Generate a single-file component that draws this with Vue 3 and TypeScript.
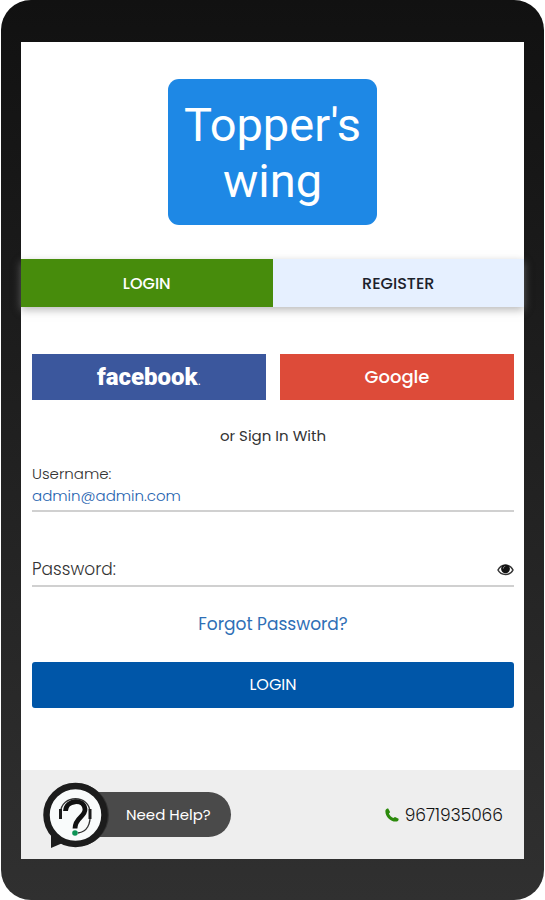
<script setup lang="ts">
import { ref } from 'vue'

type Tab = 'login' | 'register'

const tabs: { id: Tab; label: string }[] = [
  { id: 'login', label: 'LOGIN' },
  { id: 'register', label: 'REGISTER' },
]
const activeTab = ref<Tab>('login')
const username = ref('admin@admin.com')
const password = ref('')
const showPassword = ref(false)
</script>

<template>
  <div class="device">
    <main class="screen">
      <header class="brand">
        <h1 class="logo">Topper's<br />wing</h1>
      </header>

      <nav class="tabs">
        <button
          v-for="tab in tabs"
          :key="tab.id"
          type="button"
          class="tab"
          :class="{ active: tab.id === activeTab }"
          @click="activeTab = tab.id"
        >
          {{ tab.label }}
        </button>
      </nav>

      <form class="form" @submit.prevent>
        <div class="social">
          <button type="button" class="facebook">facebook<span class="mark">.</span></button>
          <button type="button" class="google">Google</button>
        </div>

        <p class="divider">or Sign In With</p>

        <div class="field stacked">
          <label for="username">Username:</label>
          <input id="username" v-model="username" type="text" autocomplete="username" />
        </div>

        <div class="field inline">
          <label for="password">Password:</label>
          <input
            id="password"
            v-model="password"
            :type="showPassword ? 'text' : 'password'"
            autocomplete="current-password"
          />
          <button type="button" class="eye" aria-label="Show password" @click="showPassword = !showPassword">
            <svg viewBox="0 0 17 13" width="17" height="13">
              <path d="M1 7C4 .6 13 .6 16 7C13 13 4 13 1 7Z" fill="#fff" stroke="#333" stroke-width="1.5" />
              <circle cx="8.5" cy="5.800" r="4.400" fill="#111" />
              <path d="M6.300 5.600C6.300 4.300 7 3.500 8.200 3.400" fill="none" stroke="#aaa" stroke-width=".8" />
            </svg>
          </button>
        </div>

        <a class="forgot" href="#forgot">Forgot Password?</a>

        <button type="submit" class="submit">LOGIN</button>
      </form>

      <footer class="footer">
        <button type="button" class="help">
          <svg class="help-icon" viewBox="0 0 66 68" width="66" height="68" aria-hidden="true">
            <circle cx="35" cy="33" r="31" fill="#333" />
            <path d="M8 44V66L22 60Z" fill="#1c1c1c" />
            <circle cx="32.500" cy="33" r="29" fill="#f9fbfb" stroke="#1c1c1c" stroke-width="6.500" />
            <path d="M17.500 31C18 12 47 12 47 31C48 42 44 50 35 51" fill="none" stroke="#333" stroke-width="1.300" />
            <path d="M17.500 27V37M47 27V37" fill="none" stroke="#1c1c1c" stroke-width="3" />
            <path d="M22.500 29C23 17.500 41 16.500 42 27C42.500 35 32 35 32 46.500" fill="none" stroke="#111" stroke-width="4.800" />
            <circle cx="32" cy="51" r="2.800" fill="#0d9355" />
          </svg>
          <span>Need Help?</span>
        </button>
        <a class="phone" href="tel:9671935066">
          <svg viewBox="0 0 14 14" width="14" height="14" aria-hidden="true">
            <path d="M.5 2.200C1 .8 2 .3 3.200 .4L5.100 4C4.900 4.800 4.200 5.200 3.900 5.600C4.800 7.800 6.300 9.300 8.400 10.100C8.900 9.700 9.300 8.900 10 8.900L13.600 10.800C13.800 12 13 13.100 11.700 13.500C6 14.500 -.5 8 .5 2.200Z" fill="#2c8a0c" />
          </svg>
          9671935066
        </a>
      </footer>
    </main>
  </div>
</template>

<style>
body {
  background: #fff;
}
</style>

<style scoped>
* {
  box-sizing: border-box;
}

.device {
  display: flex;
  min-height: 100vh;
  margin: 0 1px;
  padding: 42px 20px 41px;
  border-radius: 30px;
  background: linear-gradient(#111, #303030);
  font-family: Poppins, Inter, sans-serif;
  font-size: 15px;
  line-height: 22px;
  color: #333;
}

.screen {
  display: flex;
  flex: 1;
  flex-direction: column;
  min-width: 0;
  background: #fff;
}

button,
input {
  padding: 0;
  border: 0;
  background: none;
  font: inherit;
  color: inherit;
}

button {
  cursor: pointer;
}

a {
  text-decoration: none;
}

.brand {
  display: flex;
  justify-content: center;
  padding: 37px 16px 34px;
}

.logo {
  margin: 0;
  padding: 18px 16px 16px;
  border-radius: 11px;
  background: #1e88e5;
  color: #fff;
  font: 400 47px/56px Roboto, sans-serif;
  text-align: center;
}

.tabs {
  display: grid;
  grid-template-columns: 1fr 1fr;
  box-shadow: 0 3px 8px rgba(140, 140, 140, 0.6);
}

.tab {
  height: 48px;
  padding-top: 2px;
  background: #e6f0ff;
  color: #1c222c;
  font-size: 16px;
  font-weight: 500;
}

.tab.active {
  background: #478c0c;
  color: #fff;
}

.form {
  display: flex;
  flex: 1;
  flex-direction: column;
  padding: 47px 10px 62px 11px;
}

.social {
  display: grid;
  grid-template-columns: 1fr 1fr;
  gap: 14px;
}

.social button {
  height: 46px;
  color: #fff;
}

.social .facebook {
  background: #3b579d;
  font: 900 24px/46px Roboto, sans-serif;
}

.social .mark {
  font-size: 12px;
  font-weight: 400;
}

.social .google {
  background: #dd4b39;
  font-size: 18px;
  font-weight: 500;
}

.divider {
  margin: 25px 0 16px;
  text-align: center;
}

.field {
  display: flex;
  border-bottom: 2px solid #d0d0d0;
}

.field input {
  min-width: 0;
  outline: 0;
}

.stacked {
  flex-direction: column;
  padding-bottom: 3px;
  font-weight: 300;
}

.stacked input {
  height: 22px;
  color: #1f63b0;
}

.inline {
  align-items: center;
  margin-top: 46px;
  padding-bottom: 5px;
  font-size: 17px;
  font-weight: 300;
}

.inline input {
  flex: 1;
}

.eye {
  display: flex;
}

.forgot {
  align-self: center;
  margin: 26px 0 27px;
  color: #2f6fb6;
  font-size: 17px;
}

.submit {
  height: 46px;
  border-radius: 3px;
  background: #0056a8;
  color: #fff;
  font-size: 16px;
}

.footer {
  display: flex;
  align-items: center;
  justify-content: space-between;
  padding: 22px 21px;
  background: #eee;
}

.help {
  position: relative;
  height: 45px;
  margin-left: 30px;
  padding: 0 20px 0 54px;
  border-radius: 23px;
  background: #4a4a4a;
  color: #fff;
}

.help-icon {
  position: absolute;
  top: -10px;
  left: -29px;
}

.phone {
  display: flex;
  align-items: center;
  gap: 6px;
  color: #111;
  font-size: 17px;
  font-weight: 300;
}
</style>
